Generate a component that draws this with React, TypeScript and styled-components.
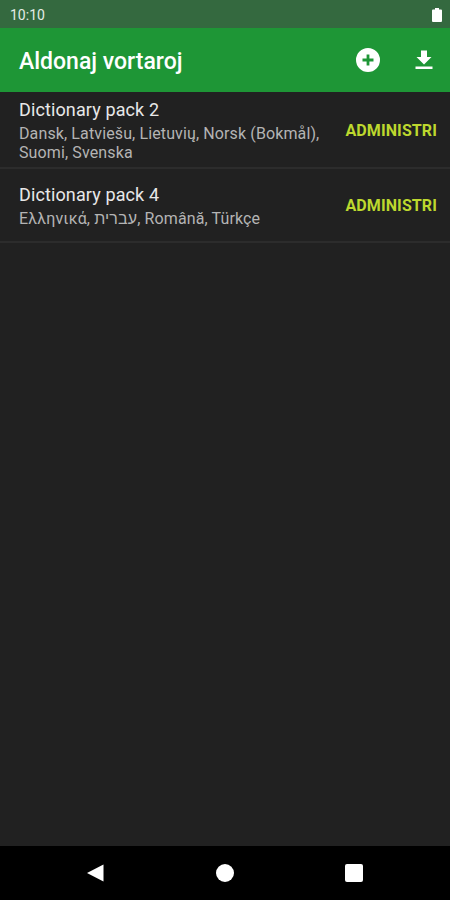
import { createGlobalStyle } from "styled-components"
import styled from "styled-components"

const GlobalStyle = createGlobalStyle`
    html, body {
        margin: 0;
        padding: 0;
        background: #212121;
    }
    * {
        box-sizing: border-box;
    }
`

const Screen = styled.div`
    width: 450px;
    height: 900px;
    display: flex;
    flex-direction: column;
    background: #212121;
    font-family: Roboto, "Noto Sans", sans-serif;
    overflow: hidden;
`

const StatusBar = styled.div`
    height: 28px;
    flex: none;
    display: flex;
    align-items: center;
    justify-content: space-between;
    padding: 2px 8px 0 10px;
    background: #34693f;
    color: #e4ece6;
    font-size: 14px;
`

const Toolbar = styled.header`
    height: 64px;
    flex: none;
    display: flex;
    align-items: center;
    padding: 0 14px 0 19px;
    background: #1e9636;
    color: #fff;
`

const Title = styled.h1`
    flex: 1;
    margin: 2px 0 0;
    font-size: 23px;
    font-weight: 500;
`

const ToolButton = styled.button`
    width: 24px;
    height: 24px;
    padding: 0;
    border: 0;
    background: none;
    margin-left: 32px;
    display: flex;
`

const List = styled.main`
    flex: 1;
`

const Row = styled.div<{ $height: number }>`
    height: ${p => p.$height}px;
    display: flex;
    align-items: center;
    padding: 2px 13px 0 19px;
    border-bottom: 2px solid #2c2c2c;
`

const Info = styled.div`
    flex: 1;
    min-width: 0;
`

const Name = styled.div`
    color: #e8e8e8;
    font-size: 18px;
    line-height: 22px;
    letter-spacing: 0.12px;
`

const Languages = styled.div`
    color: #b4b4b4;
    font-size: 16px;
    line-height: 19px;
    margin-top: 3px;
    width: 310px;
    letter-spacing: 0.12px;
`

const Manage = styled.span`
    color: #bdd82e;
    font-size: 16px;
    font-weight: 700;
    line-height: 20px;
    letter-spacing: 0.1px;
`

const NavBar = styled.nav`
    height: 54px;
    flex: none;
    display: flex;
    align-items: center;
    justify-content: space-between;
    padding: 0 86px;
    background: #000;
`

const NavIcon = styled.svg`
    width: 20px;
    height: 20px;
    fill: #fff;
`

const packs = [
    { name: "Dictionary pack 2", languages: "Dansk, Latviešu, Lietuvių, Norsk (Bokmål), Suomi, Svenska", height: 77 },
    { name: "Dictionary pack 4", languages: "Ελληνικά, עברית, Română, Türkçe", height: 74 },
]

function App(): JSX.Element {
    return (<>
        <GlobalStyle />
        <Screen>
            <StatusBar>
                <span>10:10</span>
                <svg width="10" height="14" viewBox="0 0 10 14" fill="#fff">
                    <path d="M3 0h4v1.500h2a1 1 0 0 1 1 1V13a1 1 0 0 1-1 1H1a1 1 0 0 1-1-1V2.500a1 1 0 0 1 1-1h2z" />
                </svg>
            </StatusBar>
            <Toolbar>
                <Title>Aldonaj vortaroj</Title>
                <ToolButton aria-label="add">
                    <svg width="24" height="24" viewBox="0 0 24 24" fill="#fff">
                        <path d="M12 0a12 12 0 1 0 0 24 12 12 0 0 0 0-24zm5.500 13.400h-4.100v4.100h-2.800v-4.100H6.500v-2.800h4.100V6.500h2.800v4.100h4.100z" />
                    </svg>
                </ToolButton>
                <ToolButton aria-label="download">
                    <svg width="24" height="24" viewBox="0 0 24 24" fill="#fff">
                        <path d="M19 9h-4V2.500H9V9H4.500l7.500 7.500L19.500 9H19zM3.500 18.500V21h17v-2.500h-17z" />
                    </svg>
                </ToolButton>
            </Toolbar>
            <List>
                {packs.map(pack => (
                    <Row key={pack.name} $height={pack.height}>
                        <Info>
                            <Name>{pack.name}</Name>
                            <Languages>{pack.languages}</Languages>
                        </Info>
                        <Manage>ADMINISTRI</Manage>
                    </Row>
                ))}
            </List>
            <NavBar>
                <NavIcon viewBox="0 0 20 20"><path d="M17.500 1.500v17L1 10z" /></NavIcon>
                <NavIcon viewBox="0 0 20 20"><circle cx="10" cy="10" r="9" /></NavIcon>
                <NavIcon viewBox="0 0 20 20"><rect x="1" y="1" width="18" height="18" rx="2" /></NavIcon>
            </NavBar>
        </Screen>
    </>)
}

export default App
